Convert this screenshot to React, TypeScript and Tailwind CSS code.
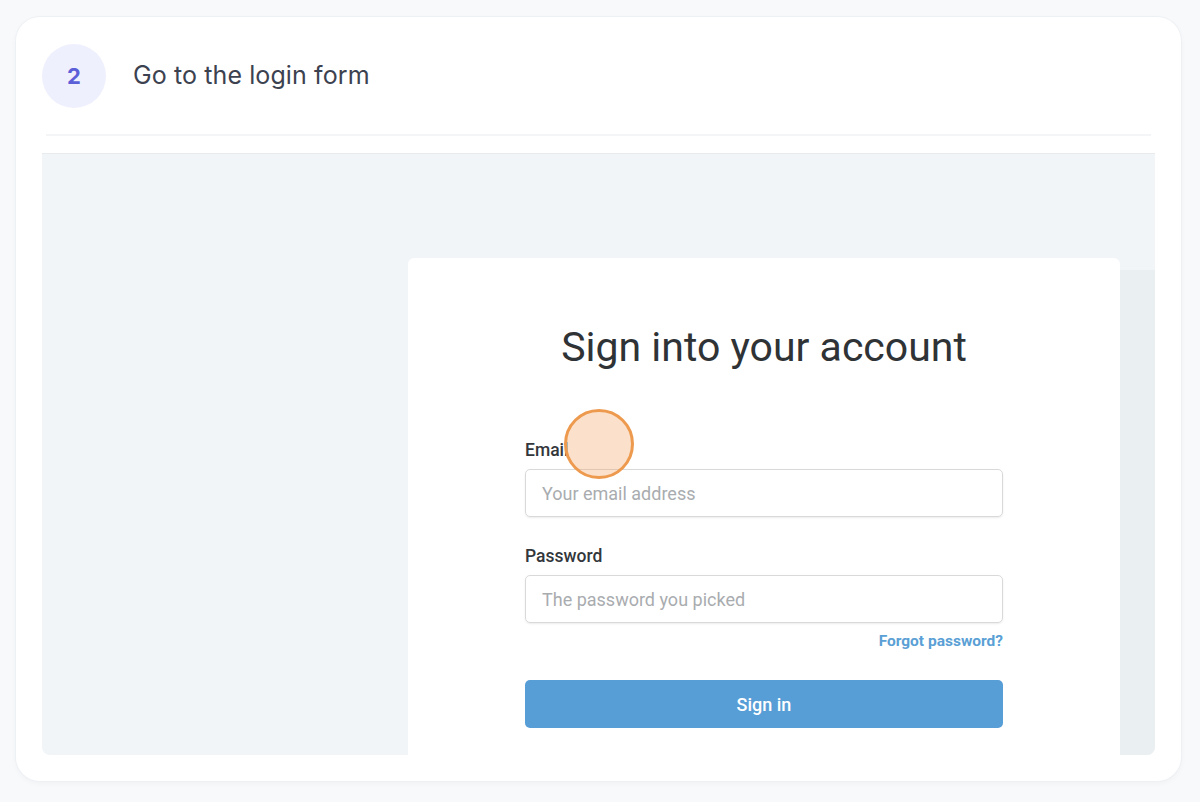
import React from "react";

export default function App() {
  return (
    <div className="w-[1200px] h-[802px] bg-[#f7f9fb] pt-[17px] pl-[16px] overflow-hidden">
      <div className="w-[1165px] h-[764px] bg-white rounded-[24px] shadow-[0_0_0_1px_#eef1f4,0_2px_6px_rgba(0,0,0,0.04)] px-[26px] pt-[27px] pb-[26px] flex flex-col">
        {/* header */}
        <div className="flex items-center h-[64px]">
          <div className="w-[64px] h-[64px] rounded-full bg-[#eff0fd] flex items-center justify-center text-[#5b5fd8] text-[22px] font-bold" style={{ fontFamily: "Inter, 'Noto Sans', sans-serif" }}>
            2
          </div>
          <div className="ml-[27px] text-[25px] text-[#3c4250] tracking-[0.1px]" style={{ fontFamily: "Inter, 'Noto Sans', sans-serif" }}>
            Go to the login form
          </div>
        </div>
        <div className="mt-[26px] mx-[4px] h-[2px] bg-[#f3f5f7]" />
        {/* screenshot */}
        <div className="mt-[17px] flex-1 bg-[#f1f5f8] border-t border-[#e7ebee] rounded-b-[8px] overflow-hidden flex pt-[104px] pl-[366px]" style={{ fontFamily: "Roboto, 'Liberation Sans', sans-serif" }}>
          <div className="w-[712px] bg-white rounded-t-[6px] flex flex-col items-center pt-[65px]">
            <div className="text-[41px] leading-[48px] text-[#2f3336]">Sign into your account</div>
            <div className="w-[478px] mt-[68px] relative">
              <div className="text-[17.5px] leading-[22px] font-medium text-[#33373b]">Email</div>
              <div className="mt-[8px] h-[48px] border border-[#d9d9d9] rounded-[5px] shadow-[0_1px_2px_rgba(0,0,0,0.08)] flex items-center px-[16px] text-[18px] text-[#a9acaf]">
                Your email address
              </div>
              <div className="mt-[28px] text-[17.5px] leading-[22px] font-medium text-[#33373b]">Password</div>
              <div className="mt-[8px] h-[48px] border border-[#d9d9d9] rounded-[5px] shadow-[0_1px_2px_rgba(0,0,0,0.08)] flex items-center px-[16px] text-[18px] text-[#a9acaf]">
                The password you picked
              </div>
              <div className="mt-[8px] text-right text-[15.5px] leading-[20px] font-bold text-[#5a9fd5]">Forgot password?</div>
              <div className="mt-[29px] h-[48px] rounded-[5px] bg-[#579dd6] flex items-center justify-center text-white text-[18px] font-medium">
                Sign in
              </div>
              <div className="absolute left-[39px] top-[-30px] w-[70px] h-[70px] rounded-full border-[3px] border-[#ee9a4e] bg-[rgba(244,170,110,0.35)]" />
            </div>
          </div>
          <div className="w-[35px] mt-[12px] bg-[#eaeff1]" />
        </div>
      </div>
    </div>
  );
}
